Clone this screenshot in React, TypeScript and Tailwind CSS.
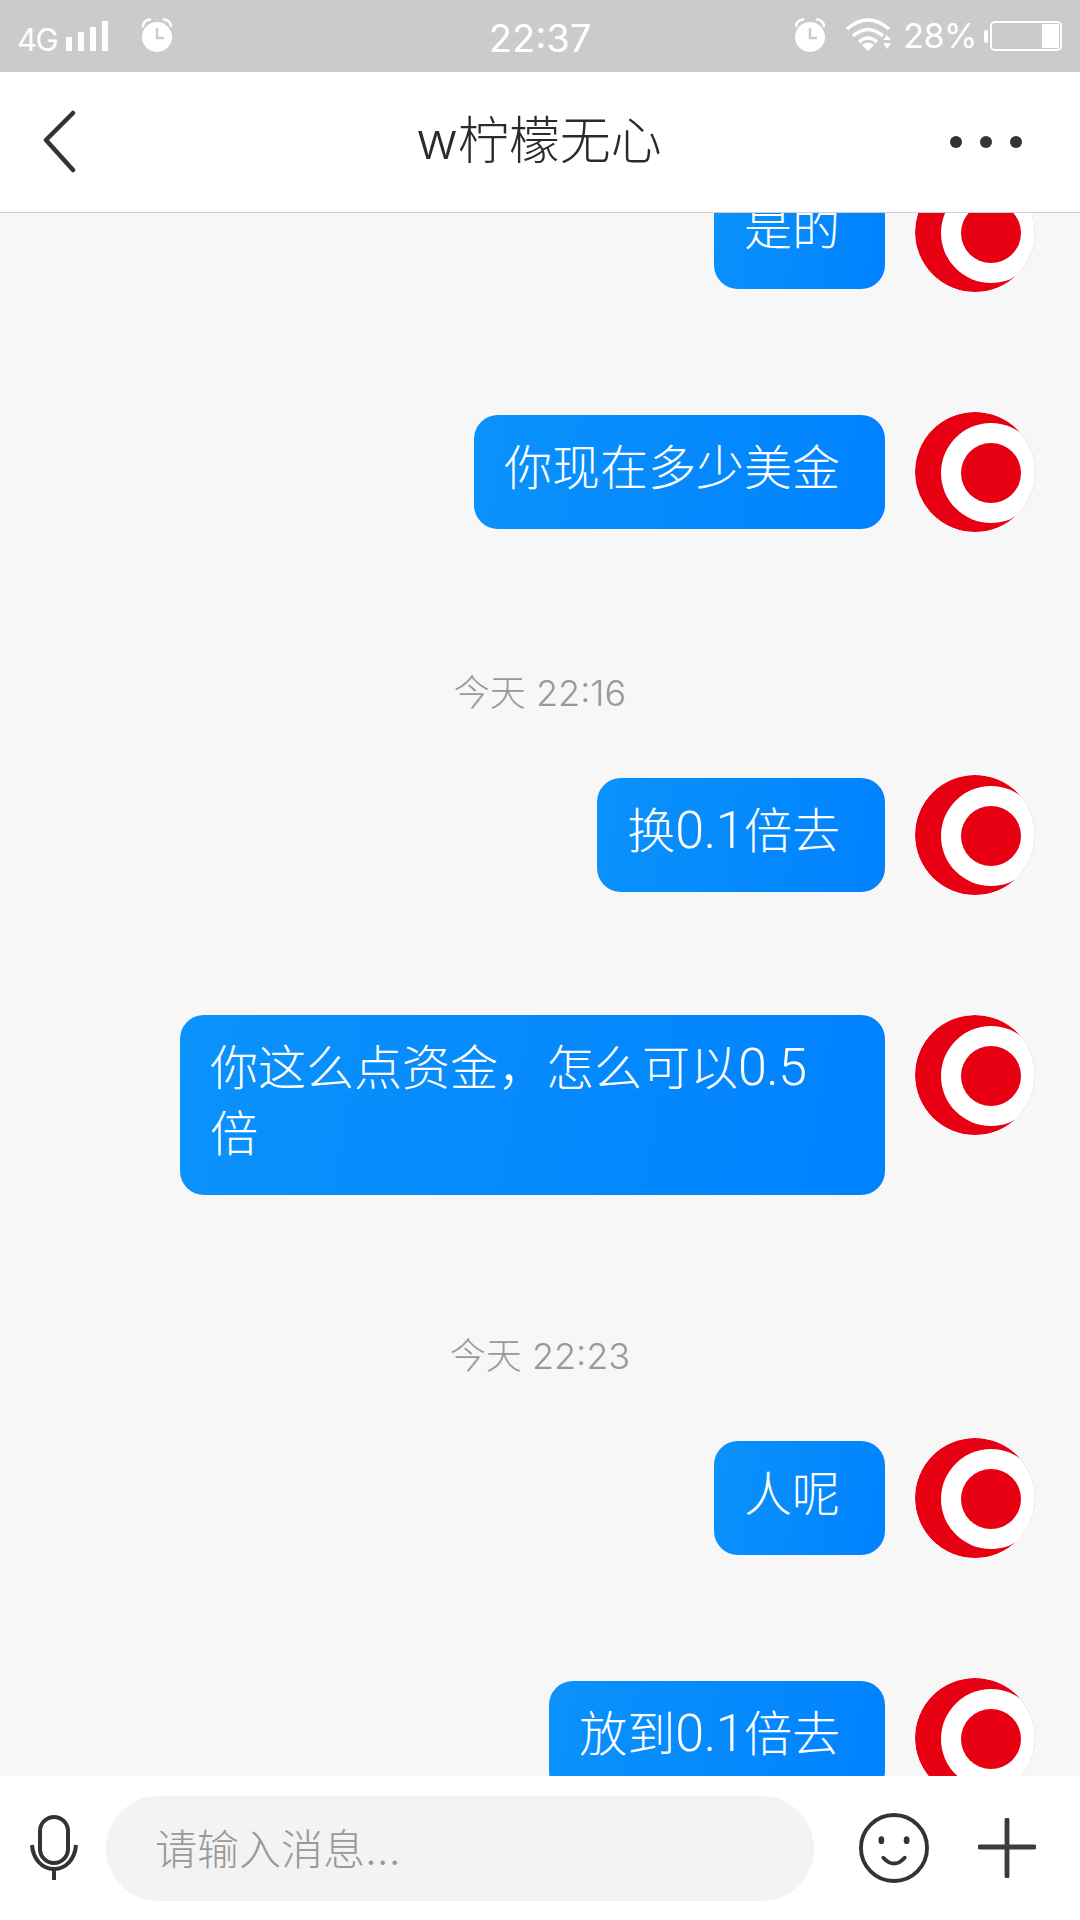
import type { ReactNode } from "react"

const fontStack = { fontFamily: 'Inter, "Noto Sans CJK SC", sans-serif' }

function Avatar() {
  return (
    <svg viewBox="0 0 120 120" className="w-[120px] h-[120px] shrink-0">
      <defs>
        <clipPath id="avatar-clip">
          <circle cx="60" cy="60" r="60" />
        </clipPath>
      </defs>
      <g clipPath="url(#avatar-clip)">
        <circle cx="60" cy="60" r="60" fill="#e60012" />
        <circle cx="76" cy="61" r="50" fill="#ffffff" />
        <circle cx="76" cy="61" r="30" fill="#e60012" />
      </g>
    </svg>
  )
}

function Bubble({ children, top = "mt-[3px]" }: { children: ReactNode; top?: string }) {
  return (
    <div className="flex justify-end items-start gap-[30px] pr-[45px] mb-[120px]">
      <div className={`${top} max-w-[705px] rounded-[24px] bg-[linear-gradient(100deg,#0b92fb,#0082ff)] pl-[30px] pr-[45px] pt-[20px] pb-[28px] text-[48px] leading-[66px] font-light text-white`}>
        {children}
      </div>
      <Avatar />
    </div>
  )
}

function Num({ children }: { children: string }) {
  return <span className="font-[Roboto] text-[52px] tracking-[-0.5px]">{children}</span>
}

function TimeLabel({ text }: { text: string }) {
  return (
    <div className="pt-[21px] pb-[62px] text-center text-[36px] leading-10 font-light text-[#999999]">
      {text}
    </div>
  )
}

function AlarmIcon() {
  return (
    <svg viewBox="0 0 34 34" className="w-[34px] h-[34px]">
      <circle cx="17" cy="19" r="15" fill="#ffffff" />
      <path d="M3 8 Q4 2 10 1.5 M31 8 Q30 2 24 1.5" fill="none" stroke="#ffffff" strokeWidth="2.5" strokeLinecap="round" />
      <path d="M17 10 V20 H24" fill="none" stroke="#cbcbcb" strokeWidth="2.5" />
    </svg>
  )
}

function StatusBar() {
  return (
    <div className="relative h-[72px] shrink-0 bg-[#cbcbcb] flex items-center justify-between text-white pl-[17px] pr-[18px]">
      <div className="flex items-center">
        <span className="mt-[6px] text-[31px] leading-none tracking-[-1.5px]">4G</span>
        <svg viewBox="0 0 44 32" className="ml-[9px] mt-[2px] w-[44px] h-[32px]">
          <rect x="0" y="16" width="6" height="14" fill="#ffffff" />
          <rect x="12" y="11" width="6" height="19" fill="#ffffff" />
          <rect x="24" y="6" width="6" height="24" fill="#ffffff" />
          <rect x="36" y="0" width="6" height="30" fill="#ffffff" />
        </svg>
        <div className="ml-[30px] -mt-[2px]">
          <AlarmIcon />
        </div>
      </div>
      <span className="absolute left-0 right-0 top-[2px] text-center text-[38px] font-normal leading-[72px]">22:37</span>
      <div className="flex items-center">
        <div className="-mt-[2px]">
          <AlarmIcon />
        </div>
        <svg viewBox="0 0 46 34" className="ml-[19px] -mt-[2px] w-[46px] h-[34px]">
          <path d="M1 11 Q22 -7 43 11" fill="none" stroke="#ffffff" strokeWidth="3.5" />
          <path d="M7 18 Q22 5 37 18" fill="none" stroke="#ffffff" strokeWidth="3.5" />
          <path d="M13 24 Q22 16 31 24" fill="none" stroke="#ffffff" strokeWidth="3.5" />
          <path d="M16 27 Q22 22 28 27 L22 33 Z" fill="#ffffff" />
          <path d="M41 17 L45 22 H37 Z M37 25 H45 L41 31 Z" fill="#ffffff" />
        </svg>
        <span className="ml-[11px] text-[34px] leading-none font-normal tracking-[-0.5px]">28%</span>
        <svg viewBox="0 0 78 32" className="ml-[7px] w-[78px] h-[32px]">
          <rect x="0" y="10" width="4" height="13" rx="2" fill="#ffffff" />
          <rect x="7" y="2" width="70" height="28" rx="4" fill="none" stroke="#ffffff" strokeWidth="2" />
          <rect x="58" y="4" width="17" height="24" fill="#ffffff" />
        </svg>
      </div>
    </div>
  )
}

function NavBar() {
  return (
    <div className="h-[141px] shrink-0 bg-white border-b border-[#cfcfcf] grid grid-cols-[1fr_auto_1fr] items-center">
      <svg viewBox="0 0 36 64" className="ml-[41px] w-[36px] h-[64px]">
        <path d="M32 3 L5 30 L32 60" fill="none" stroke="#333333" strokeWidth="4.5" strokeLinecap="round" strokeLinejoin="round" />
      </svg>
      <div className="-mt-[3px] -ml-[2px] text-[51px] font-light leading-none text-[#2b2b2b]">w柠檬无心</div>
      <div className="flex justify-end gap-[18px] pr-[58px]">
        <span className="w-3 h-3 rounded-full bg-[#333333]" />
        <span className="w-3 h-3 rounded-full bg-[#333333]" />
        <span className="w-3 h-3 rounded-full bg-[#333333]" />
      </div>
    </div>
  )
}

function InputBar() {
  return (
    <div className="h-[144px] shrink-0 bg-white flex items-center">
      <svg viewBox="0 0 48 66" className="ml-[30px] w-[48px] h-[66px]">
        <rect x="10" y="2" width="28" height="46" rx="14" fill="none" stroke="#333333" strokeWidth="4" />
        <path d="M2 30 C3 44 12 54 24 54 C36 54 45 44 46 30" fill="none" stroke="#333333" strokeWidth="4" />
        <path d="M24 54 V65" stroke="#333333" strokeWidth="4" />
      </svg>
      <div className="ml-[28px] w-[708px] h-[105px] rounded-full bg-[#f3f3f3] flex items-center pl-[49px] text-[42px] font-light text-[#999999]">
        <span className="mt-[2px]">请输入消息...</span>
      </div>
      <svg viewBox="0 0 72 72" className="ml-[45px] w-[70px] h-[70px]">
        <circle cx="36" cy="36" r="34" fill="none" stroke="#333333" strokeWidth="4" />
        <ellipse cx="23" cy="28" rx="3" ry="4" fill="#333333" />
        <ellipse cx="49" cy="28" rx="3" ry="4" fill="#333333" />
        <path d="M25 46 Q36 58 47 46" fill="none" stroke="#333333" strokeWidth="4" strokeLinecap="round" />
      </svg>
      <svg viewBox="0 0 60 62" className="ml-[49px] w-[58px] h-[60px]">
        <path d="M30 2 V60 M2 30 H58" stroke="#3c3c3c" strokeWidth="5" strokeLinecap="round" />
      </svg>
    </div>
  )
}

export default function App() {
  return (
    <div className="w-[1080px] h-[1920px] flex flex-col overflow-hidden bg-[#f7f7f7]" style={fontStack}>
      <StatusBar />
      <NavBar />
      <div className="flex-1 overflow-hidden">
        {/* scrolled list, first row is cut by the nav bar */}
        <div className="-mt-[41px]">
          <Bubble>是的</Bubble>
          <Bubble>你现在多少美金</Bubble>
          <TimeLabel text="今天 22:16" />
          <Bubble>换<Num>0.1</Num>倍去</Bubble>
          <Bubble top="mt-0">你这么点资金，怎么可以<Num>0.5</Num>倍</Bubble>
          <TimeLabel text="今天 22:23" />
          <Bubble>人呢</Bubble>
          <Bubble>放到<Num>0.1</Num>倍去</Bubble>
        </div>
      </div>
      <InputBar />
    </div>
  )
}
